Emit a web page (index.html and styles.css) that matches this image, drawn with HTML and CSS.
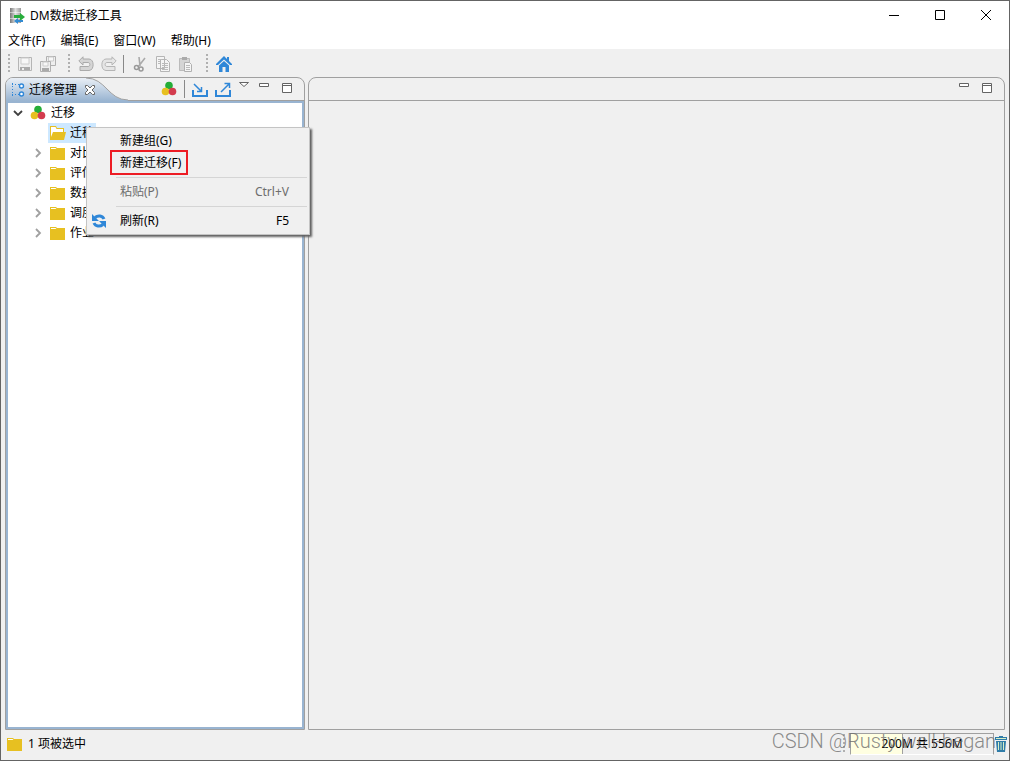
FILE: index.html
```html
<!DOCTYPE html>
<html lang="zh-CN">
<head>
<meta charset="utf-8">
<title>DM数据迁移工具</title>
<link rel="stylesheet" href="styles.css">
</head>
<body>
<svg class="defs" aria-hidden="true">
  <symbol id="folder" viewBox="0 0 16 16"><path fill="#e7c021" d="M0 2h6l1 1h8v12H0z"/><path fill="#fff" d="M1 3h4.500l1 1H1z"/></symbol>
  <symbol id="balls" viewBox="0 0 16 16"><circle cx="8" cy="4.500" r="3.800" fill="#25ad38"/><circle cx="4.500" cy="10.500" r="3.800" fill="#e7c021"/><circle cx="11.500" cy="10.500" r="3.800" fill="#d33c4e"/></symbol>
  <symbol id="chevron" viewBox="0 0 10 10"><path d="M3 1l4 4-4 4" fill="none" stroke="#a0a0a0" stroke-width="1.800"/></symbol>
  <symbol id="min" viewBox="0 0 12 12"><path d="M1.500 2.500h9v3h-9z" fill="#fff" stroke="#646464"/></symbol>
  <symbol id="max" viewBox="0 0 12 12"><path d="M1.500.5h9v9h-9zM1.500 2.500h9" fill="#fff" stroke="#646464"/></symbol>
</svg>
<div class="window">
  <header class="titlebar">
    <svg class="i16" viewBox="0 0 16 16"><defs><linearGradient id="metal"><stop stop-color="#777"/><stop offset=".5" stop-color="#e0e0e0"/><stop offset="1" stop-color="#999"/></linearGradient></defs><path fill="url(#metal)" d="M1 0h11v4.500H1zM1 5h11v5H1zM1 10.500h11V15H1z"/><path fill="#28ad3c" d="M5 7h6V5l5 4-5 4v-3H5z"/><path fill="#328bd2" d="M14 12H9v-2l-4 3 4 3v-2h5z"/></svg>
    <h1 class="title">DM数据迁移工具</h1>
    <div class="captions">
      <button class="caption" aria-label="最小化"><svg class="i12" viewBox="0 0 12 12"><path d="M1 5.500h10" stroke="#000"/></svg></button>
      <button class="caption" aria-label="最大化"><svg class="i12" viewBox="0 0 12 12"><path d="M1.500.5h9v9h-9z" fill="none" stroke="#000"/></svg></button>
      <button class="caption" aria-label="关闭"><svg class="i12" viewBox="0 0 12 12"><path d="M1 0l10 10M11 0L1 10" stroke="#000"/></svg></button>
    </div>
  </header>
  <nav class="menubar">
    <button class="menu">文件(F)</button><button class="menu">编辑(E)</button><button class="menu">窗口(W)</button><button class="menu">帮助(H)</button>
  </nav>
  <div class="toolbar">
    <span class="grip"></span>
    <button class="tool" aria-label="保存"><svg class="i16" viewBox="0 0 16 16"><path fill="#eee" stroke="#b5b5b5" d="M1.500 1.500h13v13h-13z"/><path fill="#f7f7f7" stroke="#ccc" d="M4 2h8v6H4z"/><path fill="#aaa" d="M3 11h10v3H3z"/><path fill="#eee" d="M5 12h2v2H5z"/></svg></button>
    <button class="tool" aria-label="全部保存"><svg class="i16" viewBox="0 0 16 16"><path fill="#eee" stroke="#b0b0b0" d="M6.500.5h9v9h-9z"/><path fill="#f7f7f7" stroke="#ccc" d="M8.500 1h5v4h-5z"/><path fill="#eee" stroke="#b0b0b0" d="M.5 5.500h10v10H.5z"/><path fill="#f7f7f7" stroke="#ccc" d="M3 6h5v4H3z"/><path fill="#aaa" d="M2 12h7v3H2z"/></svg></button>
    <span class="grip"></span>
    <button class="tool" aria-label="撤销"><svg class="i16" viewBox="0 0 16 16"><path fill="#d5d5d5" stroke="#aaa" d="M5 .8L.8 5 5 9V6.500h5c2.500 0 2.500 4 0 4H2v4h9c5.500 0 5.500-11.500 0-11.500H5z"/></svg></button>
    <button class="tool" aria-label="重做"><svg class="i16" viewBox="0 0 16 16"><path fill="#e5e5e5" stroke="#b5b5b5" d="M11 .8L15.200 5 11 9V6.500H6c-2.500 0-2.500 4 0 4h8v4H5C-.5 14.500-.5 3 5 3h6z"/></svg></button>
    <span class="rule"></span>
    <button class="tool" aria-label="剪切"><svg class="i16" viewBox="0 0 16 16"><path fill="none" stroke="#aaa" stroke-width="1.600" d="M7 1l1 9M13 2L6 11"/><circle cx="4.500" cy="11.500" r="2" fill="none" stroke="#999" stroke-width="1.500"/><circle cx="9" cy="13" r="2" fill="none" stroke="#999" stroke-width="1.500"/></svg></button>
    <button class="tool" aria-label="复制"><svg class="i16" viewBox="0 0 16 16"><path fill="#f5f5f5" stroke="#b5b5b5" d="M1.500.5h8v12h-8zM5.500 3.500h6l3 3v9h-9z"/><path stroke="#bbb" d="M3 3.500h4M3 5.500h2M3 7.500h2M7 7.500h6M7 9.500h6M7 11.500h6M7 13.500h6"/></svg></button>
    <button class="tool" aria-label="粘贴"><svg class="i16" viewBox="0 0 16 16"><path fill="#d5d5d5" stroke="#bbb" d="M1.500 2.500h10v12h-10z"/><path fill="#aaa" d="M4 1h5v3H4z"/><path fill="#f5f5f5" stroke="#b0b0b0" d="M6.500 6.500h5l2 2v7h-7z"/><path stroke="#bbb" d="M8 9.500h4M8 11.500h4M8 13.500h4"/></svg></button>
    <span class="grip"></span>
    <button class="tool" aria-label="主页"><svg class="i16" viewBox="0 0 16 16"><path fill="#2f87d8" d="M8 0l3 3V1h2v4l3 3v1h-2L8 3.500 2 9H0V8zM8 5l5 4.500V16H9.500v-5h-3v5H3V9.500z"/></svg></button>
  </div>
  <main class="workbench">
    <section class="pane navigator">
      <div class="pane-head">
        <svg class="tab-shape" viewBox="0 0 122 23" aria-hidden="true"><defs><linearGradient id="tab" x2="0" y2="1"><stop stop-color="#e9eff6"/><stop offset="1" stop-color="#99b4d1"/></linearGradient></defs><path d="M0 23V0h80c20 0 22 22 42 22v1z" fill="url(#tab)"/><path d="M80 0c20 0 22 22 42 22" fill="none" stroke="#a0a0a0"/></svg>
        <div class="tab">
          <svg class="i16" viewBox="0 0 16 16"><path d="M2.500 1v13M2 2.500h8M2 12.500h8" stroke="#2f87d8" stroke-dasharray="1 2"/><g fill="#fff" stroke="#2f87d8" stroke-width="1.400"><circle cx="11.500" cy="4" r="2"/><circle cx="11.500" cy="12" r="2"/></g></svg>
          <span>迁移管理</span>
          <button class="plain" aria-label="关闭视图"><svg class="i12" viewBox="0 0 12 12"><path d="M1.500 1.500h2L6 4l2.500-2.500h2v2L8 6l2.500 2.500v2h-2L6 8l-2.500 2.500h-2v-2L4 6 1.500 3.500z" fill="#fff" stroke="#666"/></svg></button>
        </div>
        <div class="view-tools">
          <button class="plain" aria-label="迁移"><svg class="i16"><use href="#balls"/></svg></button>
          <span class="rule"></span>
          <button class="plain" aria-label="导入"><svg class="i16" viewBox="0 0 16 16"><path d="M1 9v6h14V9" fill="none" stroke="#2f87d8" stroke-width="2"/><path d="M2 3l7 7M9.500 6v4.500H5" fill="none" stroke="#2f87d8" stroke-width="1.500"/></svg></button>
          <button class="plain" aria-label="导出"><svg class="i16" viewBox="0 0 16 16"><path d="M1 9v6h14V9" fill="none" stroke="#2f87d8" stroke-width="2"/><path d="M6 11l8-8M9.500 2.500h5V7" fill="none" stroke="#2f87d8" stroke-width="1.500"/></svg></button>
          <button class="plain top" aria-label="视图菜单"><svg class="i12" viewBox="0 0 12 12"><path d="M1.500 1.500h9L6 5.500z" fill="#fff" stroke="#646464"/></svg></button>
          <button class="plain top" aria-label="最小化视图"><svg class="i12"><use href="#min"/></svg></button>
          <button class="plain" aria-label="最大化视图"><svg class="i12"><use href="#max"/></svg></button>
        </div>
      </div>
      <ul class="tree">
        <li class="root"><svg class="i10" viewBox="0 0 10 10"><path d="M1 3l4 4 4-4" fill="none" stroke="#404040" stroke-width="1.800"/></svg><svg class="i16"><use href="#balls"/></svg><span>迁移</span></li>
        <li class="node"><span class="i10"></span><span class="selected"><svg class="i16" viewBox="0 0 16 16"><path fill="#e7c021" d="M0 1h6l1 2h7v4h2l-2 8H0z"/><path fill="#fff" d="M1 2h4.500l1 2H13v3H3L1 12z"/></svg><span>迁移</span></span></li>
        <li class="node"><svg class="i10"><use href="#chevron"/></svg><svg class="i16"><use href="#folder"/></svg><span>对比</span></li>
        <li class="node"><svg class="i10"><use href="#chevron"/></svg><svg class="i16"><use href="#folder"/></svg><span>评估</span></li>
        <li class="node"><svg class="i10"><use href="#chevron"/></svg><svg class="i16"><use href="#folder"/></svg><span>数据</span></li>
        <li class="node"><svg class="i10"><use href="#chevron"/></svg><svg class="i16"><use href="#folder"/></svg><span>调度</span></li>
        <li class="node"><svg class="i10"><use href="#chevron"/></svg><svg class="i16"><use href="#folder"/></svg><span>作业</span></li>
      </ul>
    </section>
    <section class="pane editor">
      <div class="pane-head">
        <div class="view-tools">
          <button class="plain top" aria-label="最小化编辑器"><svg class="i12"><use href="#min"/></svg></button>
          <button class="plain" aria-label="最大化编辑器"><svg class="i12"><use href="#max"/></svg></button>
        </div>
      </div>
    </section>
  </main>
  <footer class="status">
    <svg class="i16"><use href="#folder"/></svg>
    <span>1 项被选中</span>
    <span class="grip heap-grip"></span>
    <div class="heap"><span class="heap-used"></span><span class="heap-text">200M 共 556M</span></div>
    <button class="plain" aria-label="回收内存"><svg class="trash" viewBox="0 0 12 16"><path fill="#2f7ca8" d="M4 0h4v1h4v3H0V1h4zM1 5h10l-1 11H2z"/><path stroke="#d9eec5" d="M1 2.500h10M3.500 6v8M6 6v8M8.500 6v8"/></svg></button>
  </footer>
  <div class="context-menu" role="menu">
    <button class="item" role="menuitem"><span>新建组(G)</span></button>
    <button class="item marked" role="menuitem"><span>新建迁移(F)</span></button>
    <hr class="sep">
    <button class="item" role="menuitem" disabled><span>粘贴(P)</span><span>Ctrl+V</span></button>
    <hr class="sep">
    <button class="item refresh" role="menuitem"><svg class="i16" viewBox="0 0 16 16"><g fill="none" stroke="#2f87d8" stroke-width="3"><path d="M13 6C11.500 2.500 7 2 4 4.500"/><path d="M3 10c1.500 3.500 6 4 9 1.500"/></g><path fill="#2f87d8" d="M1 1v7h7zM15 15V8H8z"/></svg><span>刷新(R)</span><span>F5</span></button>
  </div>
  <div class="watermark">CSDN @Rusty well-began</div>
</div>
</body>
</html>
```
FILE: styles.css
```css
*, *::after { box-sizing: border-box; }
body { margin: 0; font: 12px/20px "Noto Sans", "Noto Sans CJK SC", sans-serif; color: #000; }
button { font: inherit; color: inherit; background: none; border: 0; padding: 0; margin: 0; }
svg { display: block; flex: none; }
.defs { position: absolute; width: 0; height: 0; }
.i16 { width: 16px; height: 16px; }
.i12 { width: 12px; height: 12px; }
.i10 { width: 10px; height: 10px; flex: none; }
.window { position: relative; display: flex; flex-direction: column; height: 100vh; background: #f0f0f0; border: 1px solid #646464; }
.titlebar { display: flex; align-items: center; gap: 5px; height: 30px; padding-left: 8px; background: #fff; flex: none; }
.title { margin: 0; font-size: 12px; font-weight: 400; }
.captions { display: flex; margin-left: auto; height: 100%; }
.caption { width: 46px; display: flex; align-items: center; justify-content: center; }
.menubar { display: flex; gap: 15px; height: 18px; padding-left: 7px; background: #fff; line-height: 20px; flex: none; }
.toolbar { display: flex; align-items: center; gap: 7px; height: 28px; padding: 2px 0 0 7px; flex: none; }
.grip { width: 2px; height: 20px; background: repeating-linear-gradient(#b0b0b0 0 2px, transparent 2px 4px); }
.toolbar .grip ~ .grip { margin-left: 5px; }
.toolbar .grip ~ .grip + .tool { margin-left: 1px; }
.rule { width: 1px; height: 18px; background: #888; }
.toolbar .rule { margin: 0 1px 0 -1px; }
.workbench { flex: 1; display: flex; gap: 3px; padding: 0 4px; min-height: 0; }
.pane { display: flex; flex-direction: column; border: 1px solid #a0a0a0; border-radius: 8px 8px 0 0; overflow: hidden; }
.navigator { width: 300px; flex: none; }
.editor { flex: 1; }
.pane-head { position: relative; display: flex; height: 23px; border-bottom: 1px solid #a0a0a0; flex: none; }
.tab-shape { position: absolute; left: 0; top: 0; width: 122px; height: 23px; }
.tab { position: relative; display: flex; align-items: center; gap: 7px; padding: 1px 0 0 4px; }
.tab .i16 { margin-right: -4px; }
.view-tools { display: flex; align-items: center; gap: 7px; margin-left: auto; padding-right: 11px; }
.editor .view-tools { gap: 11px; }
.view-tools .top { align-self: flex-start; padding-top: 3px; }
.navigator .top + .plain { margin-left: 2px; }
.navigator .top + .top + .plain { margin-left: 4px; }
.navigator .top + .top { margin-left: 1px; }
.tree { flex: 1; margin: 0; padding: 0; list-style: none; background: #fff; border: 2px solid #99b4d1; }
.root, .node { display: flex; align-items: center; height: 20px; gap: 7px; padding-left: 5px; }
.root { gap: 5px; }
.root .i16 { margin-left: 2px; }
.node { padding-left: 25px; }
.node .i16 { margin-right: -3px; }
.selected { display: flex; align-items: center; gap: 7px; height: 20px; margin-left: -2px; padding: 0 2px; background: #cde8ff; }
.status { display: flex; align-items: center; gap: 5px; height: 30px; padding: 0 2px 2px 6px; flex: none; }
.heap-grip { margin-left: auto; }
.heap { position: relative; width: 144px; height: 22px; background: #f0f0f0; border: 1px solid #a0a0a0; border-bottom-color: #fff; text-align: center; }
.heap-used { position: absolute; inset: 0 auto 0 0; width: 52px; background: #ffffe1; border-right: 1px solid #a0a0a0; }
.heap-text { position: relative; }
.status .plain { margin-left: -4px; }
.trash { width: 12px; height: 16px; }
.context-menu { position: absolute; left: 85px; top: 126px; width: 224px; padding: 2px; background: #f0f0f0; border: 1px solid #c4c4c4; box-shadow: 2px 2px 2px #606060; display: flex; flex-direction: column; }
.item { position: relative; display: flex; align-items: center; justify-content: space-between; height: 22px; padding: 0 18px 0 31px; text-align: left; }
.item:disabled { color: #6d6d6d; }
.marked::after { content: ""; position: absolute; left: 21px; top: -2px; width: 78px; height: 25px; border: 2px solid #ed1c24; }
.refresh { padding-left: 2px; }
.refresh .i16 { margin-right: 13px; }
.refresh span:last-child { margin-left: auto; }
.sep { width: calc(100% - 27px); height: 1px; margin: 3px 0 3px 27px; border: 0; background: #d5d5d5; }
.watermark { position: absolute; right: 13px; bottom: 5px; font: 300 20px/28px Roboto, sans-serif; color: rgba(110, 110, 110, .8); pointer-events: none; }
```
